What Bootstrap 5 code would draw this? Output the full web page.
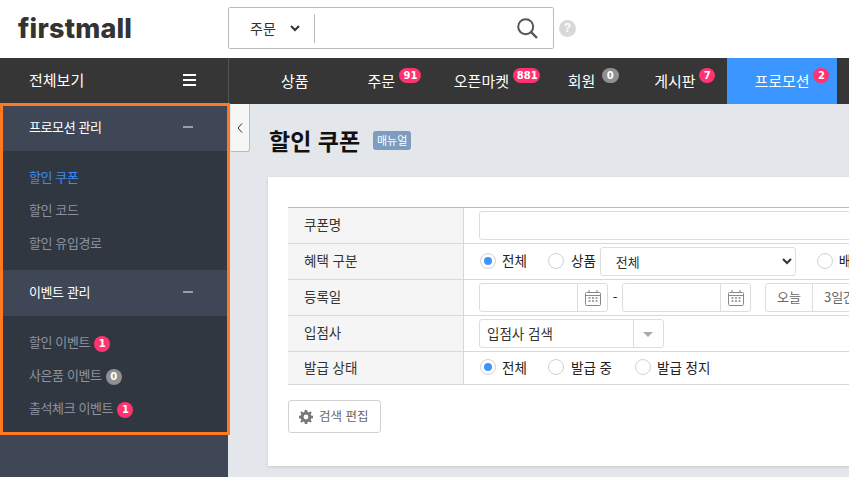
<!DOCTYPE html>
<html lang="ko">
<head>
<meta charset="utf-8">
<title>할인 쿠폰</title>
<link rel="stylesheet" href="https://cdn.jsdelivr.net/npm/bootstrap@5.3.0/dist/css/bootstrap.min.css">
<style>
html,body{height:100%;overflow:hidden}
body{font-family:"Noto Sans CJK KR","Noto Sans",sans-serif;font-size:13.5px;color:#222;background:#e3e6ea}
.fm-top{height:58px;background:#fff}
.fm-logo{width:228px;padding-left:18px;font-family:Inter,"Liberation Sans",sans-serif;font-weight:800;font-size:27px;line-height:58px;color:#333;letter-spacing:.2px}
.fm-search{width:326px;height:42px;margin-top:7px;border:1px solid #bbb;border-radius:2px}
.fm-scope{width:85px;padding-left:21px;font-size:14px;color:#333}
.fm-scope svg{margin-left:14px}
.fm-sep{width:1px;height:29px;background:#bbb}
.fm-lens{margin-right:15px}
.fm-help{width:17px;height:17px;margin:20px 0 0 5px;border-radius:50%;background:#d8d8d8;color:#fff;font:700 12px/17px "Liberation Sans",sans-serif;text-align:center}
.fm-nav{height:46px;background:#363636;color:#fff;font-size:15px}
.fm-all{width:229px;padding:0 32px 2px 29px;border-right:1px solid #555}
.fm-burger{width:13px;height:12px;border-top:2px solid #fff;border-bottom:2px solid #fff;position:relative}
.fm-burger::after{content:"";position:absolute;left:0;right:0;top:3px;height:2px;background:#fff}
.fm-tabs{padding-left:25px;gap:4.800px}
.fm-tab{position:relative;padding:0 27px;line-height:45px;white-space:nowrap}
.fm-tab-on{background:#3b96ff}
.fm-count{position:absolute;top:10px;height:15px;min-width:16px;padding:0 4px;border-radius:8px;background:#ff3370;color:#fff;font:700 10px/15px "DejaVu Sans",sans-serif;text-align:center}
.fm-c91{left:59px;width:22px}
.fm-c881{left:86px;width:27px}
.fm-c0{left:61px;min-width:17px}
.fm-c7{left:72px}
.fm-c2{left:86px}
.fm-zero{background:#918f8f}
.fm-inline{display:inline-block;width:16px;height:16px;padding:0;margin-left:4px;border-radius:50%;font-size:10px;line-height:16px;vertical-align:0}
.fm-body{height:373px}
.fm-side{width:228px;flex:none;background:#3f4655;position:relative;z-index:2}
.fm-frame{width:230px;margin-top:-1px;border:3px solid #ff7a1f;background:#313741;position:relative;letter-spacing:-.4px}
.fm-grp{height:46px;padding:0 34px 2px 26px;background:#3f4655;color:#fff;font-size:13px}
.fm-grp-a{height:45px;padding-bottom:3px}
.fm-grp i{display:block;width:10px;height:2px;background:#9a9ea8}
.fm-links{padding:9px 0 11px 26px}
.fm-links-b{padding-bottom:8px}
.fm-links a{display:block;height:33px;line-height:33px;color:#8b93a0;text-decoration:none;font-size:13px;white-space:nowrap}
.fm-links a.fm-cur{color:#3b8cf5}
.fm-main{position:relative;flex:1;min-width:0;padding:0 0 0 40px}
.fm-fold{position:absolute;left:3px;top:0;width:19px;height:48px;background:#f6f6f6;border:1px solid #bbb;border-width:0 1px 1px 0;border-radius:0 0 3px 0}
.fm-title{height:73px;padding-bottom:2px}
.fm-title h1{font-size:23px;font-weight:700;line-height:38px;margin:0 0 0 1px;color:#111}
.fm-manual{margin:1px 0 0 13px;height:19px;width:38px;text-align:center;background:#7d9cc0;color:#fff;font-size:11px;line-height:19px;border-radius:3px}
.fm-sheet{width:800px;height:289px;padding:30px 20px;background:#fff;box-shadow:0 1px 3px rgba(0,0,0,.12)}
.fm-rows{width:760px;border-top:1px solid #bbb}
.fm-row{height:36px;border-bottom:1px solid #d8d8d8}
.fm-row-last{height:33px}
.fm-th{width:176px;flex:none;padding:0 0 2px 16px;background:#f5f5f5;border-right:1px solid #d8d8d8;color:#333;height:100%}
.fm-td{padding-left:15px;white-space:nowrap;color:#222}
.fm-input{height:29px;border:1px solid #ddd;border-radius:3px;background:#fff}
.fm-radio{display:inline-block;width:16px;height:16px;margin:0 6px 2px 1px;border:1px solid #d2d2d2;border-radius:50%;background:#fff;position:relative;flex:none}
.fm-radio-on::after{content:"";position:absolute;inset:3px;border-radius:50%;background:#3b96ff}
.fm-lab{padding-bottom:2px}
.fm-date{width:129px;display:flex;justify-content:flex-end;overflow:hidden}
.fm-cal{width:30px;border-left:1px solid #ddd;display:flex;align-items:center;justify-content:center}
.fm-pick{height:29px;width:196px;margin:0 20px 0 4px;padding-left:11px;border:1px solid #ddd;border-radius:3px;background:#fff;color:#333;font-size:13px}
.fm-range{height:29px;border:1px solid #ddd;border-radius:3px;color:#666;font-size:13px;margin-left:14px}
.fm-range span{padding:0 11px;line-height:26px}
.fm-range span+span{border-left:1px solid #ddd}
.fm-opt1{width:46px;white-space:nowrap;padding-bottom:2px}
.fm-opt2{width:63px;white-space:nowrap;padding-bottom:2px}
.fm-r2{margin-left:0;margin-right:7px}
.fm-dash{width:14px;text-align:center}
.fm-seller{width:185px}
.fm-seller-t{padding-left:7px;color:#333}
.fm-caret{width:30px;height:100%;border-left:1px solid #ddd;position:relative}
.fm-caret::after{content:"";position:absolute;left:9px;top:12px;border:5px solid transparent;border-top-color:#aaa;border-bottom:0}
.fm-edit{height:33px;margin-top:15px;width:93px;gap:6px;border:1px solid #d2d2d2;border-radius:3px;color:#666;background:#fff;font-size:12.500px;padding:0 0 0 10px}
</style>
</head>
<body>
<div class="fm-top d-flex">
  <div class="fm-logo">firstmall</div>
  <div class="fm-search d-flex align-items-center">
    <div class="fm-scope d-flex align-items-center"><span>주문</span><svg width="10" height="7" viewBox="0 0 10 7"><path d="M1 1l4 4 4-4" fill="none" stroke="#333" stroke-width="2"/></svg></div>
    <div class="fm-sep"></div>
    <div class="flex-grow-1"></div>
    <svg class="fm-lens" width="21" height="21" viewBox="0 0 21 21"><circle cx="8.700" cy="8.700" r="7.500" fill="none" stroke="#555" stroke-width="2"/><path d="M14 14l6 6" stroke="#555" stroke-width="2.400"/></svg>
  </div>
  <div class="fm-help">?</div>
</div>
<div class="fm-nav d-flex">
  <div class="fm-all d-flex align-items-center justify-content-between"><span>전체보기</span><div class="fm-burger"></div></div>
  <div class="fm-tabs d-flex">
    <div class="fm-tab">상품</div>
    <div class="fm-tab">주문<span class="fm-count fm-c91">91</span></div>
    <div class="fm-tab">오픈마켓<span class="fm-count fm-c881">881</span></div>
    <div class="fm-tab">회원<span class="fm-count fm-zero fm-c0">0</span></div>
    <div class="fm-tab">게시판<span class="fm-count fm-c7">7</span></div>
    <div class="fm-tab fm-tab-on">프로모션<span class="fm-count fm-c2">2</span></div>
  </div>
</div>
<div class="fm-body d-flex">
  <aside class="fm-side">
    <div class="fm-frame">
      <div class="fm-grp fm-grp-a d-flex align-items-center justify-content-between"><span>프로모션 관리</span><i></i></div>
      <div class="fm-links">
        <a class="fm-cur" href="#">할인 쿠폰</a>
        <a href="#">할인 코드</a>
        <a href="#">할인 유입경로</a>
      </div>
      <div class="fm-grp d-flex align-items-center justify-content-between"><span>이벤트 관리</span><i></i></div>
      <div class="fm-links fm-links-b">
        <a href="#">할인 이벤트<span class="fm-count fm-inline position-static">1</span></a>
        <a href="#">사은품 이벤트<span class="fm-count fm-zero fm-inline position-static">0</span></a>
        <a href="#">출석체크 이벤트<span class="fm-count fm-inline position-static">1</span></a>
      </div>
    </div>
  </aside>
  <main class="fm-main">
    <div class="fm-fold d-flex align-items-center justify-content-center"><svg width="6" height="10" viewBox="0 0 6 10"><path d="M5 .5L1 5l4 4.500" fill="none" stroke="#333"/></svg></div>
    <div class="fm-title d-flex align-items-center"><h1>할인 쿠폰</h1><span class="fm-manual">매뉴얼</span></div>
    <div class="fm-sheet">
      <div class="fm-rows">
        <div class="fm-row d-flex align-items-center"><div class="fm-th d-flex align-items-center">쿠폰명</div><div class="fm-td flex-grow-1"><div class="fm-input w-100"></div></div></div>
        <div class="fm-row d-flex align-items-center"><div class="fm-th d-flex align-items-center">혜택 구분</div><div class="fm-td d-flex align-items-center">
          <span class="fm-radio fm-radio-on"></span><span class="fm-opt1">전체</span>
          <span class="fm-radio fm-r2"></span><span class="fm-lab">상품</span>
          <select class="fm-pick"><option>전체</option></select>
          <span class="fm-radio"></span><span class="fm-lab">배송비</span>
        </div></div>
        <div class="fm-row d-flex align-items-center"><div class="fm-th d-flex align-items-center">등록일</div><div class="fm-td d-flex align-items-center">
          <div class="fm-input fm-date"><span class="fm-cal"><svg width="16" height="16" viewBox="0 0 16 16"><rect x=".5" y="2.500" width="15" height="13" rx="1" fill="none" stroke="#888"/><path d="M.5 5.500h15M4 0v3M12 0v3" stroke="#888"/><path d="M3.500 8h2M7 8h2M10.500 8h2M3.500 11h2M7 11h2M10.500 11h2" stroke="#888" stroke-width="1.500"/></svg></span></div>
          <span class="fm-dash">-</span>
          <div class="fm-input fm-date"><span class="fm-cal"><svg width="16" height="16" viewBox="0 0 16 16"><rect x=".5" y="2.500" width="15" height="13" rx="1" fill="none" stroke="#888"/><path d="M.5 5.500h15M4 0v3M12 0v3" stroke="#888"/><path d="M3.500 8h2M7 8h2M10.500 8h2M3.500 11h2M7 11h2M10.500 11h2" stroke="#888" stroke-width="1.500"/></svg></span></div>
          <div class="fm-range d-flex"><span>오늘</span><span>3일간</span></div>
        </div></div>
        <div class="fm-row d-flex align-items-center"><div class="fm-th d-flex align-items-center">입점사</div><div class="fm-td d-flex align-items-center">
          <div class="fm-input fm-seller d-flex align-items-center"><span class="flex-grow-1 fm-seller-t">입점사 검색</span><span class="fm-caret"></span></div>
        </div></div>
        <div class="fm-row fm-row-last d-flex align-items-center"><div class="fm-th d-flex align-items-center">발급 상태</div><div class="fm-td d-flex align-items-center">
          <span class="fm-radio fm-radio-on"></span><span class="fm-opt1">전체</span>
          <span class="fm-radio fm-r2"></span><span class="fm-opt2">발급 중</span>
          <span class="fm-radio"></span><span class="fm-lab">발급 정지</span>
        </div></div>
      </div>
      <button class="btn fm-edit d-flex align-items-center" type="button"><svg width="14" height="14" viewBox="0 0 14 14"><path fill="#777" fill-rule="evenodd" d="M5.800 0h2.400l.4 1.900 1.200.5L11.500 1.300l1.200 1.200-1.100 1.700.5 1.200 1.900.4v2.400l-1.900.4-.5 1.200 1.100 1.600-1.200 1.200-1.700-1.100-1.200.5L8.200 14H5.800l-.4-1.900-1.200-.5-1.700 1.100-1.200-1.200 1.100-1.600-.5-1.200L0 8.200V5.800l1.900-.4.500-1.200L1.300 2.500l1.200-1.200 1.700 1.100 1.200-.5zM7 4.600a2.400 2.400 0 1 0 0 4.800 2.400 2.400 0 0 0 0-4.800z"/></svg><span>검색 편집</span></button>
    </div>
  </main>
</div>
</body>
</html>
